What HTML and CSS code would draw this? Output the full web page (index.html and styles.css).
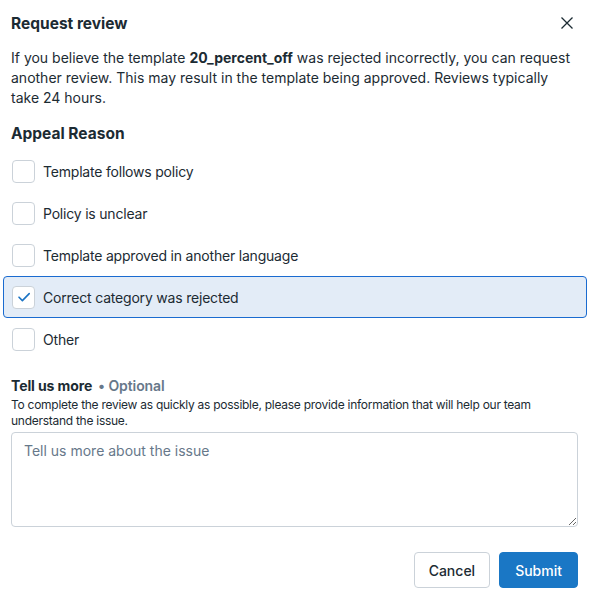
FILE: index.html
```html
<!DOCTYPE html>
<html>
<head>
<meta charset="utf-8">
<link rel="stylesheet" href="styles.css">
</head>
<body>
<div class="dialog">
  <div class="header">
    <h1 class="title">Request review</h1>
    <button class="close" aria-label="Close">
      <svg width="14" height="14" viewBox="0 0 14 14"><path d="M1.5 1.5L12.5 12.5M12.5 1.5L1.5 12.5" stroke="#1c2b33" stroke-width="1.3" fill="none"/></svg>
    </button>
  </div>
  <p class="intro">If you believe the template <strong>20_percent_off</strong> was rejected incorrectly, you can request another review. This may result in the template being approved. Reviews typically take 24 hours.</p>
  <h2 class="section">Appeal Reason</h2>
  <div class="options">
    <label class="option"><span class="box"></span><span>Template follows policy</span></label>
    <label class="option"><span class="box"></span><span>Policy is unclear</span></label>
    <label class="option"><span class="box"></span><span>Template approved in another language</span></label>
    <label class="option selected"><span class="box"><svg width="14" height="14" viewBox="0 0 14 14"><path d="M2 7.2L5.4 10.6L12.2 3.6" stroke="#1a73c4" stroke-width="1.6" fill="none" stroke-linecap="round" stroke-linejoin="round"/></svg></span><span>Correct category was rejected</span></label>
    <label class="option"><span class="box"></span><span>Other</span></label>
  </div>
  <div class="more">
    <div class="more-title"><strong>Tell us more</strong> <span class="optional">• Optional</span></div>
    <div class="more-desc">To complete the review as quickly as possible, please provide information that will help our team understand the issue.</div>
    <textarea class="input" placeholder="Tell us more about the issue"></textarea>
  </div>
  <div class="actions">
    <button class="btn cancel">Cancel</button>
    <button class="btn submit">Submit</button>
  </div>
</div>
</body>
</html>
```
FILE: styles.css
```css
* { box-sizing: border-box; }
body {
  margin: 0;
  background: #fff;
  font-family: Inter, "Noto Sans", sans-serif;
  color: #1c2b33;
}
.dialog {
  padding: 12px 14px 0 11px;
}
.header {
  display: flex;
  align-items: center;
  justify-content: space-between;
  height: 22px;
}
.title {
  margin: 0;
  font-size: 15.5px;
  font-weight: 700;
}
.close {
  border: 0;
  background: none;
  padding: 0;
  margin-right: 4px;
  display: flex;
}
.intro {
  margin: 14px 0 0;
  font-size: 14px;
  line-height: 20px;
}
.intro strong { font-weight: 700; }
.section {
  margin: 16px 0 0;
  font-size: 15.5px;
  font-weight: 700;
  line-height: 20px;
}
.options {
  margin: 6px -9px 0 -8px;
  display: flex;
  flex-direction: column;
}
.option {
  display: flex;
  align-items: center;
  height: 42px;
  padding-left: 8px;
  gap: 8px;
  font-size: 14px;
  letter-spacing: -0.2px;
  border: 1px solid transparent;
  border-radius: 4px;
}
.option.selected {
  background: #e3ecf7;
  border-color: #1a6bd0;
}
.box {
  width: 23px;
  height: 23px;
  border: 1px solid #cbd2d9;
  border-radius: 4px;
  background: #fff;
  display: flex;
  align-items: center;
  justify-content: center;
}
.more { margin-top: 18px; }
.more-title {
  font-size: 14px;
  line-height: 16px;
  letter-spacing: -0.1px;
}
.optional {
  color: #67788a;
  font-weight: 600;
  margin-left: 2px;
}
.more-desc {
  font-size: 12px;
  line-height: 16px;
  margin-top: 3px;
  letter-spacing: -0.27px;
}
.input {
  display: block;
  width: 100%;
  height: 95px;
  margin-top: 3px;
  border: 1px solid #cbd2d9;
  border-radius: 4px;
  padding: 9px 12px;
  font-family: inherit;
  font-size: 14px;
  line-height: 18px;
  resize: vertical;
}
.input::placeholder { color: #67788a; }
.actions {
  display: flex;
  justify-content: flex-end;
  gap: 9px;
  margin-top: 25px;
}
.btn {
  height: 36px;
  border-radius: 4px;
  font-family: inherit;
  font-size: 14px;
  font-weight: 500;
  padding: 0 15px;
}
.cancel {
  background: #fff;
  border: 1px solid #cbd2d9;
  color: #1c2b33;
  padding: 0 14px;
}
.submit {
  background: #1a77c5;
  border: 1px solid #1a77c5;
  color: #fff;
}
```
